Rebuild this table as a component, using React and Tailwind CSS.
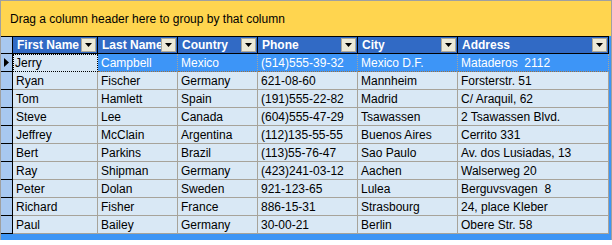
import React from 'react';

const COLUMNS = [
  { key: 'first', label: 'First Name', width: 'w-[85px]' },
  { key: 'last', label: 'Last Name', width: 'w-[80px]' },
  { key: 'country', label: 'Country', width: 'w-[80px]' },
  { key: 'phone', label: 'Phone', width: 'w-[100px]' },
  { key: 'city', label: 'City', width: 'w-[100px]' },
  { key: 'address', label: 'Address', width: 'w-[151px]' },
];

const ROWS = [
  ['Jerry', 'Campbell', 'Mexico', '(514)555-39-32', 'Mexico D.F.', 'Mataderos  2112'],
  ['Ryan', 'Fischer', 'Germany', '621-08-60', 'Mannheim', 'Forsterstr. 51'],
  ['Tom', 'Hamlett', 'Spain', '(191)555-22-82', 'Madrid', 'C/ Araquil, 62'],
  ['Steve', 'Lee', 'Canada', '(604)555-47-29', 'Tsawassen', '2 Tsawassen Blvd.'],
  ['Jeffrey', 'McClain', 'Argentina', '(112)135-55-55', 'Buenos Aires', 'Cerrito 331'],
  ['Bert', 'Parkins', 'Brazil', '(113)55-76-47', 'Sao Paulo', 'Av. dos Lusiadas, 13'],
  ['Ray', 'Shipman', 'Germany', '(423)241-03-12', 'Aachen', 'Walserweg 20'],
  ['Peter', 'Dolan', 'Sweden', '921-123-65', 'Lulea', 'Berguvsvagen  8'],
  ['Richard', 'Fisher', 'France', '886-15-31', 'Strasbourg', '24, place Kleber'],
  ['Paul', 'Bailey', 'Germany', '30-00-21', 'Berlin', 'Obere Str. 58'],
];

// Little beige filter button sitting over the right end of each header cell
function FilterButton() {
  return (
    <div className="absolute right-[1px] top-[1px] w-[15px] h-[14px] border border-[#aca899] bg-[#ece9d8] flex items-center justify-center">
      <svg width="7" height="4" viewBox="0 0 7 4">
        <polygon points="0,0 7,0 3.5,4" fill="#000" />
      </svg>
    </div>
  );
}

export default function App() {
  return (
    <div
      className="w-[612px] h-[240px] border-x border-t border-[#a0a0a0] bg-[#3d95f5] flex flex-col text-[12px] overflow-hidden"
      style={{ fontFamily: '"Liberation Sans", Arial, sans-serif' }}
    >
      {/* Group-by panel */}
      <div className="h-[35px] bg-[#ffd54f] flex items-center pl-[9px] text-black shrink-0">
        Drag a column header here to group by that column
      </div>

      {/* Header row */}
      <div className="flex h-[18px] border-y border-black w-[608px] bg-[#316ac5] shrink-0">
        <div className="w-[12px] border-r border-black bg-[#a8c8f0]" />
        {COLUMNS.map((col) => (
          <div
            key={col.key}
            className={`${col.width} relative border-r border-black flex items-center pl-[4px] text-white font-bold whitespace-nowrap overflow-hidden`}
          >
            <span className="leading-none">{col.label}</span>
            <FilterButton />
          </div>
        ))}
      </div>

      {/* Data rows */}
      {ROWS.map((row, i) => {
        const selected = i === 0;
        return (
          <div key={i} className="flex h-[18px] w-[608px] shrink-0">
            <div className="w-[12px] border-r border-b border-black bg-[#a8c8f0] flex items-center pl-[3px]">
              {selected && (
                <svg width="5" height="9" viewBox="0 0 5 9">
                  <polygon points="0,0 5,4.5 0,9" fill="#000" />
                </svg>
              )}
            </div>
            {row.map((val, j) => {
              const col = COLUMNS[j];
              let cls = 'bg-[#d9e8f5] text-black border-r border-b border-[#a7a39a] pl-[3px]';
              if (selected && j === 0) {
                cls = 'bg-[#d9e8f5] text-black border border-dotted border-black pl-[1px]';
              } else if (selected) {
                cls = 'bg-[#3d95f7] text-white border-r border-[#a7a39a] border-b border-b-[#a0703a] border-dotted pl-[3px]';
              }
              return (
                <div
                  key={j}
                  className={`${col.width} ${cls} flex items-center whitespace-pre overflow-hidden`}
                >
                  {val}
                </div>
              );
            })}
          </div>
        );
      })}
    </div>
  );
}
